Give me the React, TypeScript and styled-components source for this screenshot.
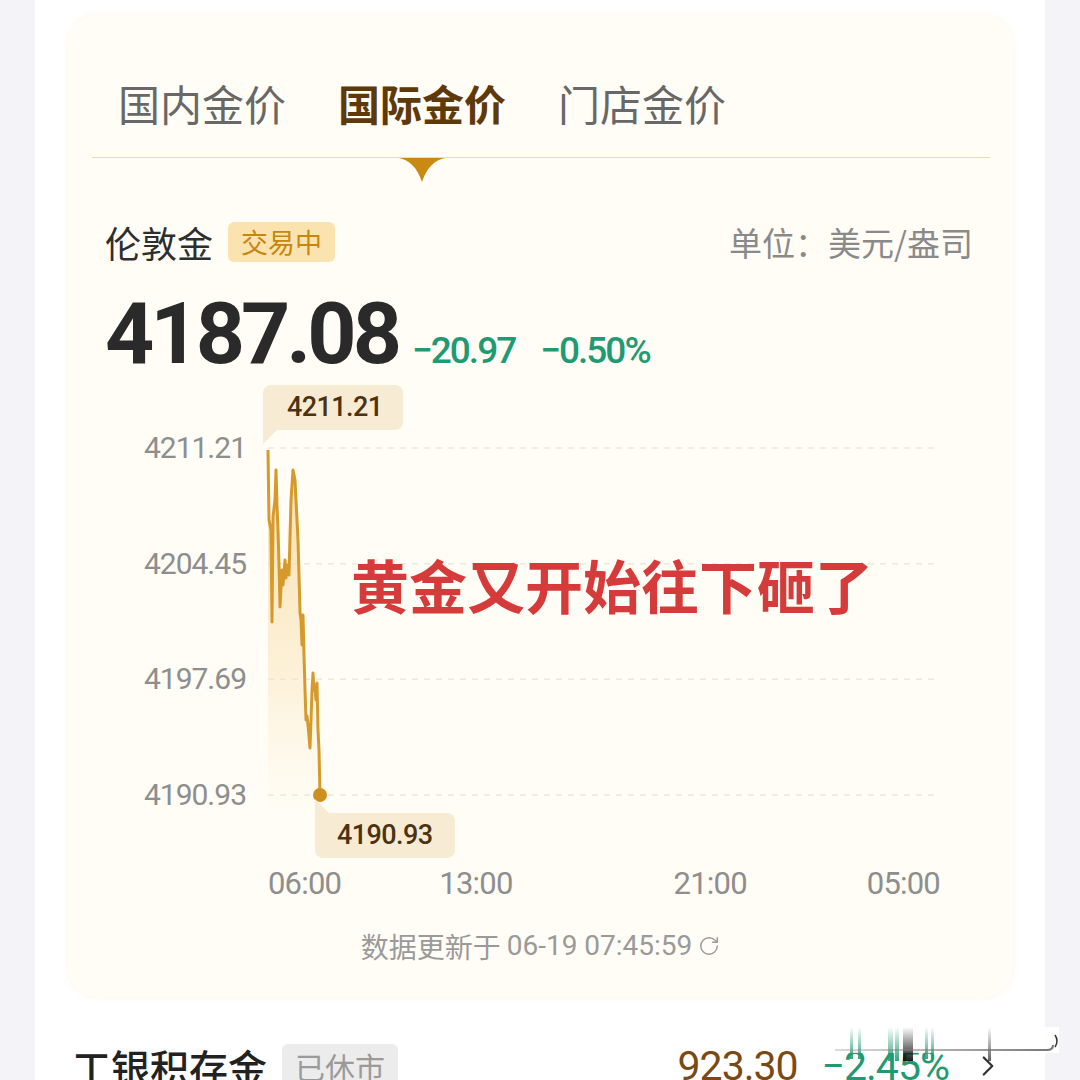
import React from 'react';
import styled, {createGlobalStyle} from 'styled-components';
import {RotateCw, ChevronRight} from 'lucide-react';

const CJK = `"Noto Sans CJK SC", "Noto Sans", sans-serif`;
const NUM = `Roboto, "Noto Sans CJK SC", sans-serif`;

const GlobalStyle = createGlobalStyle`
    html, body {
        margin: 0;
        padding: 0;
        background: #f3f3f8;
    }
    body {
        font-family: ${CJK};
    }
`

const Page = styled.div`
    width: 1080px;
    height: 1080px;
    overflow: hidden;
`

const Card = styled.div`
    margin-left: 35px;
    width: 1010px;
    height: 1080px;
    background: #fff;
    padding-top: 15px;
    box-sizing: border-box;
    position: relative;
`

const Panel = styled.section`
    margin-left: 33px;
    width: 945px;
    height: 982px;
    box-sizing: border-box;
    padding-top: 63px;
    background: #fffdf5;
    border-radius: 30px;
    box-shadow: 0 0 6px rgba(240, 230, 200, 0.35);
`

const Tabs = styled.div`
    display: flex;
    gap: 52px;
    padding-left: 50px;
`

const Tab = styled.div<{$active?: boolean}>`
    font-size: 42px;
    line-height: 50px;
    color: ${({$active}) => $active ? '#5e3a0a' : '#686868'};
    font-weight: ${({$active}) => $active ? 700 : 400};
`

const Divider = styled.div`
    margin: 29px 23px 0 24px;
    height: 1px;
    background: #e6dcb6;
`

const Indicator = styled.svg`
    display: block;
    margin-left: 331px;
`

const HeaderRow = styled.div`
    display: flex;
    align-items: center;
    margin-top: 40px;
    padding: 0 40px 0 37px;
    height: 40px;
`

const Name = styled.span`
    font-size: 36px;
    color: #2e2e2e;
`

const Badge = styled.span<{$closed?: boolean}>`
    margin-left: 15px;
    padding: 0 13px;
    height: ${({$closed}) => $closed ? '44px' : '40px'};
    line-height: ${({$closed}) => $closed ? '44px' : '40px'};
    border-radius: 6px;
    font-size: ${({$closed}) => $closed ? '30px' : '27px'};
    background: ${({$closed}) => $closed ? '#ececec' : '#fbe3b0'};
    color: ${({$closed}) => $closed ? '#9a9a9a' : '#c8860e'};
`

const Unit = styled.span`
    margin-left: auto;
    font-size: 33px;
    color: #8a8a8a;
`

const PriceRow = styled.div`
    display: flex;
    align-items: baseline;
    margin-top: 29px;
    padding-left: 37px;
`

const BigPrice = styled.span`
    font-family: ${NUM};
    font-weight: 700;
    font-size: 86px;
    line-height: 86px;
    letter-spacing: -4px;
    color: #2a2a2a;
`

const Change = styled.span<{$gap: number}>`
    margin-left: ${({$gap}) => $gap}px;
    font-family: ${NUM};
    font-weight: 500;
    font-size: 37px;
    letter-spacing: -2px;
    color: #1f9a72;
`

const Chart = styled.div`
    display: grid;
    grid-template-columns: 180px 697px;
    height: 486px;
    margin-top: 3px;
`

const YAxis = styled.div`
    display: flex;
    flex-direction: column;
    align-items: flex-end;
    gap: 85.7px;
    padding: 53px 2px 0 0;
`

const YLabel = styled.span`
    font-family: ${NUM};
    font-size: 30px;
    line-height: 30px;
    letter-spacing: -1px;
    color: #8e8e8e;
`

const Plot = styled.div`
    position: relative;
`

const Tip = styled.div<{$down?: boolean}>`
    position: absolute;
    width: 140px;
    height: 45px;
    box-sizing: border-box;
    padding-left: ${({$down}) => $down ? '22px' : '24px'};
    line-height: 45px;
    background: #f7ebd3;
    border-radius: ${({$down}) => $down ? '0 8px 8px 8px' : '8px 8px 8px 0'};
    font-family: ${NUM};
    font-weight: 500;
    font-size: 27px;
    letter-spacing: -0.6px;
    color: #4d3210;

    &::after {
        content: '';
        position: absolute;
        left: 0;
        ${({$down}) => $down ? 'top: -14px;' : 'bottom: -14px;'}
        border-left: 14px solid #f7ebd3;
        ${({$down}) => $down ? 'border-top: 14px solid transparent;' : 'border-bottom: 14px solid transparent;'}
    }
`

const Caption = styled.div`
    position: absolute;
    left: 103px;
    top: 172px;
    font-size: 58px;
    line-height: 64px;
    font-weight: 700;
    color: #d63b3b;
    white-space: nowrap;
`

const XAxis = styled.div`
    display: grid;
    grid-template-columns: 180px 697px;
    height: 36px;
`

const XTrack = styled.div`
    position: relative;
    grid-column: 2;
`

const XLabel = styled.span`
    position: absolute;
    top: 0;
    font-family: ${NUM};
    font-size: 31px;
    line-height: 36px;
    letter-spacing: -0.8px;
    color: #8e8e8e;
    white-space: nowrap;
`

const Updated = styled.div`
    display: flex;
    justify-content: center;
    align-items: center;
    gap: 6px;
    margin-top: 26px;
    font-size: 28px;
    line-height: 36px;
    color: #9a9a9a;

    .num {
        font-family: ${NUM};
    }
`

const BottomRow = styled.div`
    position: relative;
    display: flex;
    align-items: center;
    margin-top: 44px;
    padding: 0 40px 0 37px;
    height: 50px;
`

const RowName = styled.span`
    font-size: 39px;
    line-height: 50px;
    font-weight: 500;
    color: #222;
`

const RowPrice = styled.span`
    margin-left: auto;
    font-family: ${NUM};
    font-size: 41px;
    letter-spacing: -1px;
    color: #7a4a14;
`

const RowChange = styled.span`
    margin-left: 24px;
    font-family: ${NUM};
    font-size: 41px;
    letter-spacing: -1px;
    color: #1f9a72;
`

const Arrow = styled.span`
    display: flex;
    margin-left: 22px;
    color: #333;
`

const Smudge = styled.svg`
    position: absolute;
    left: 798px;
    top: -18px;
`

const points: [number, number][] = [
    [268, 450], [269, 520], [271, 530], [272, 622], [273, 517], [275, 500], [276, 470], [277, 505],
    [278, 530], [279, 565], [280, 607], [282, 570], [283, 585], [285, 560], [286, 578], [287, 565],
    [289, 575], [291, 500], [293, 470], [295, 480], [296, 500], [298, 540], [299, 575], [300, 612],
    [301, 620], [302, 645], [303, 615], [304, 655], [305, 690], [306, 720], [307, 716], [308, 725],
    [310, 748], [311, 720], [312, 690], [313, 673], [314, 690], [315, 685], [316, 700], [317, 683],
    [318, 730], [319, 750], [320, 795],
];

const gridY = [448, 563.7, 679.3, 795];
const yLabels = ['4211.21', '4204.45', '4197.69', '4190.93'];
// label centre along the 672px plot width, and how the label hangs off it
const xTicks: [string, number, number][] = [
    ['06:00', 0, 0],
    ['13:00', 0.3095, -50],
    ['21:00', 0.658, -50],
    ['05:00', 1, -100],
];

const linePath = points.map(([x, y], i) => `${i ? 'L' : 'M'}${x} ${y}`).join(' ');
const areaPath = `${linePath} L320 820 L268 820 Z`;

const PriceChart: React.FC = () => (
    <Chart>
        <YAxis>
            {yLabels.map(l => <YLabel key={l}>{l}</YLabel>)}
        </YAxis>
        <Plot>
            <svg width="697" height="486" viewBox="248 380 697 486">
                <defs>
                    <linearGradient id="area" x1="0" y1="0" x2="0" y2="1">
                        <stop offset="0" stopColor="#f7d28a" stopOpacity="0.75"/>
                        <stop offset="0.6" stopColor="#f9e2b4" stopOpacity="0.45"/>
                        <stop offset="1" stopColor="#fbecd0" stopOpacity="0"/>
                    </linearGradient>
                </defs>
                {gridY.map(y => (
                    <line key={y} x1="268" x2="940" y1={y} y2={y} stroke="#eee8da" strokeWidth="1.5" strokeDasharray="6 6"/>
                ))}
                <path d={areaPath} fill="url(#area)"/>
                <path d={linePath} fill="none" stroke="#d69a2c" strokeWidth="3" strokeLinejoin="round"/>
                <circle cx="320" cy="795" r="7" fill="#cf8f1e"/>
            </svg>
            <Tip style={{left: 15, top: 5}}>4211.21</Tip>
            <Tip $down style={{left: 67, top: 433}}>4190.93</Tip>
            <Caption>黄金又开始往下砸了</Caption>
        </Plot>
    </Chart>
);

const App: React.FC = () => (
    <Page>
        <GlobalStyle/>
        <Card>
            <Panel>
                <Tabs>
                    <Tab>国内金价</Tab>
                    <Tab $active>国际金价</Tab>
                    <Tab>门店金价</Tab>
                </Tabs>
                <Divider/>
                <Indicator width="46" height="24" viewBox="0 0 46 24">
                    <path d="M0 0 H46 C36 2 28 9 23 24 C18 9 10 2 0 0 Z" fill="#c98a12"/>
                </Indicator>
                <HeaderRow>
                    <Name>伦敦金</Name>
                    <Badge>交易中</Badge>
                    <Unit>单位：美元/盎司</Unit>
                </HeaderRow>
                <PriceRow>
                    <BigPrice>4187.08</BigPrice>
                    <Change $gap={14}>−20.97</Change>
                    <Change $gap={25}>−0.50%</Change>
                </PriceRow>
                <PriceChart/>
                <XAxis>
                    <XTrack>
                        {xTicks.map(([t, f, shift]) => (
                            <XLabel key={t} style={{left: 20 + f * 672, transform: `translateX(${shift}%)`}}>{t}</XLabel>
                        ))}
                    </XTrack>
                </XAxis>
                <Updated>
                    数据更新于 <span className="num">06-19 07:45:59</span>
                    <RotateCw size={22} strokeWidth={1.6}/>
                </Updated>
            </Panel>
            <BottomRow>
                <RowName>工银积存金</RowName>
                <Badge $closed>已休市</Badge>
                <RowPrice>923.30</RowPrice>
                <RowChange>−2.45%</RowChange>
                <Arrow><ChevronRight size={34} strokeWidth={1.6}/></Arrow>
                <Smudge width="230" height="42" viewBox="0 0 230 42">
                    <defs>
                        <linearGradient id="fadeUp" x1="0" y1="1" x2="0" y2="0">
                            <stop offset="0" stopColor="#1f9a72" stopOpacity="0.9"/>
                            <stop offset="1" stopColor="#1f9a72" stopOpacity="0"/>
                        </linearGradient>
                        <linearGradient id="fadeDark" x1="0" y1="1" x2="0" y2="0">
                            <stop offset="0" stopColor="#111" stopOpacity="0.95"/>
                            <stop offset="1" stopColor="#111" stopOpacity="0"/>
                        </linearGradient>
                        <linearGradient id="fadeLine" x1="0" y1="0" x2="1" y2="0">
                            <stop offset="0" stopColor="#888" stopOpacity="0.3"/>
                            <stop offset="1" stopColor="#666" stopOpacity="0.9"/>
                        </linearGradient>
                    </defs>
                    <rect x="0" y="4" width="226" height="26" fill="#fff" opacity="0.85"/>
                    <rect x="17" y="4" width="3" height="32" fill="url(#fadeUp)"/>
                    <rect x="25" y="4" width="3" height="32" fill="url(#fadeUp)"/>
                    <rect x="55" y="4" width="5" height="34" fill="url(#fadeUp)"/>
                    <rect x="62" y="4" width="4" height="34" fill="url(#fadeUp)"/>
                    <rect x="70" y="4" width="10" height="34" fill="url(#fadeDark)"/>
                    <rect x="92" y="4" width="3" height="32" fill="url(#fadeUp)"/>
                    <rect x="98" y="4" width="3" height="32" fill="url(#fadeUp)"/>
                    <rect x="155" y="4" width="3" height="34" fill="url(#fadeDark)" opacity="0.7"/>
                    <path d="M2 27 H214 Q220 27 220 22" fill="none" stroke="url(#fadeLine)" strokeWidth="2"/>
                    <path d="M222 12 Q226 18 222 24" fill="none" stroke="#333" strokeWidth="1.5"/>
                </Smudge>
            </BottomRow>
        </Card>
    </Page>
);

export default App;
